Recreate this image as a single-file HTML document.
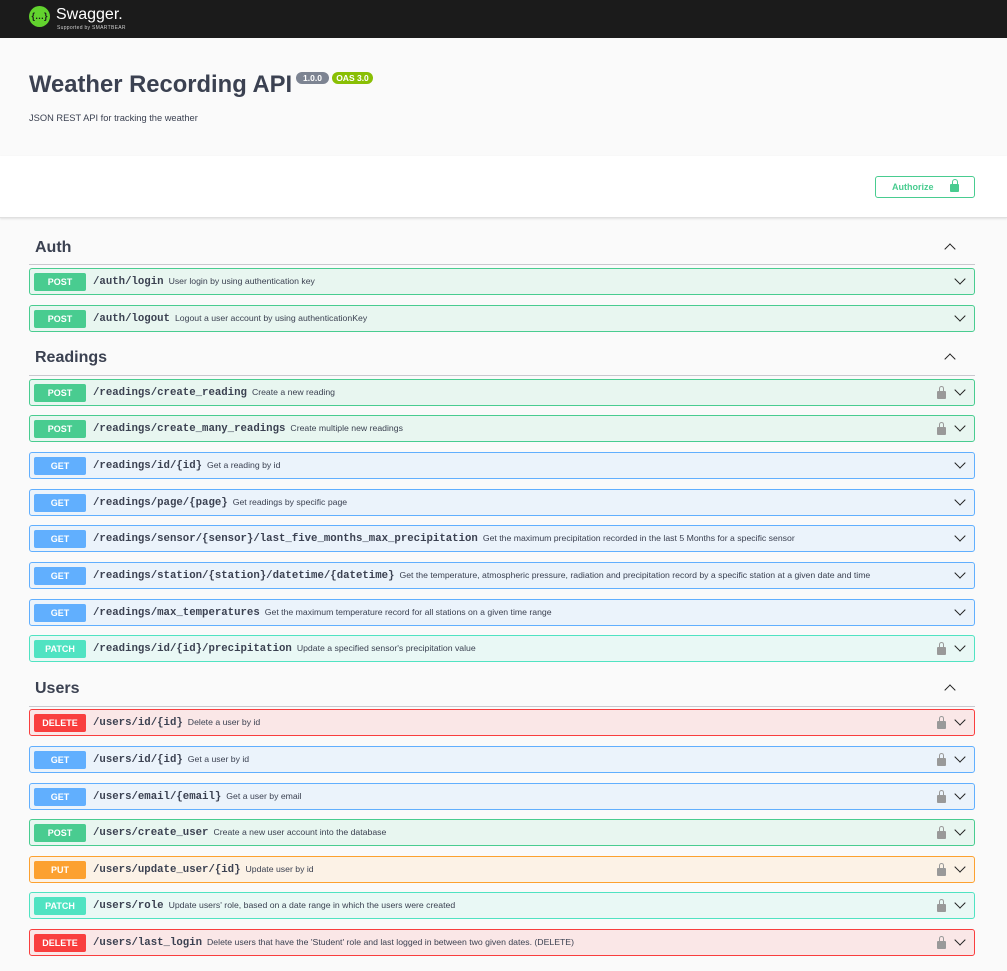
<!DOCTYPE html>
<html><head><meta charset="utf-8"><style>
*{margin:0;padding:0;box-sizing:border-box}
body{width:1007px;height:971px;background:#fafafa;font-family:"Liberation Sans",sans-serif;position:relative;overflow:hidden;color:#3b4151}
.top{position:absolute;left:0;top:0;width:1007px;height:38px;background:#1b1b1b}
.logo{position:absolute;left:29px;top:6px;width:21px;height:21px;border-radius:50%;background:#62d32e;color:#1b1b1b;font-size:9px;font-weight:bold;text-align:center;line-height:21px}
.brand{position:absolute;left:56px;top:6px;color:#fff;font-size:16px}
.sub{position:absolute;left:57px;top:25px;color:#ccc;font-size:5px;letter-spacing:.3px}
h1{position:absolute;left:29px;top:71px;font-size:23.8px;font-weight:bold;color:#3b4151}
.ver{position:absolute;top:72px;height:12px;border-radius:6px;color:#fff;font-size:8.5px;font-weight:bold;line-height:12px;text-align:center}
.desc{position:absolute;left:29px;top:113px;font-size:9.3px}
.white{position:absolute;left:0;top:156px;width:1007px;height:62px;background:#fff;border-bottom:1px solid #e0e0e0;box-shadow:0 1px 2px rgba(0,0,0,.1)}
.auth{position:absolute;left:875px;top:176px;width:100px;height:22px;border:1px solid #49cc90;border-radius:3px;color:#49cc90;font-size:9px;font-weight:bold;line-height:20px;padding-left:16px}
.auth i{position:absolute;right:15px;top:7px;width:9px;height:8px;background:#49cc90;border-radius:1px}
.auth i:before{content:"";position:absolute;left:1.5px;top:-5px;width:4px;height:5px;border:1.5px solid #49cc90;border-bottom:none;border-radius:3px 3px 0 0}
.tag{position:absolute;left:35px;font-size:16px;font-weight:bold}
.line{position:absolute;left:29px;width:946px;height:1px;background:#c8c8ce}
.up{position:absolute;left:946px;width:8px;height:8px;border-left:1.3px solid #222;border-top:1.3px solid #222;transform:rotate(45deg)}
.op{position:absolute;left:29px;width:946px;height:27px;border:1px solid;border-radius:3px}
.m{position:absolute;left:4px;top:4px;width:52px;height:18px;border-radius:2px;color:#fff;font-size:9px;font-weight:bold;text-align:center;line-height:18px}
.p{position:absolute;left:63px;top:7px;font-family:"Liberation Mono",monospace;font-weight:bold;font-size:10.7px;color:#3b4151;white-space:nowrap}
.p span{font-family:"Liberation Sans",sans-serif;font-weight:normal;font-size:8.7px;margin-left:5px}
.dn{position:absolute;right:10px;top:6px;width:8px;height:8px;border-right:1.3px solid #222;border-bottom:1.3px solid #222;transform:rotate(45deg)}
.lk{position:absolute;right:28px;top:11px;width:9px;height:8px;background:#999;border-radius:1px}
.lk:before{content:"";position:absolute;left:1.5px;top:-5px;width:3px;height:5px;border:1.5px solid #999;border-bottom:none;border-radius:3px 3px 0 0}
.post{background:#e8f6f0;border-color:#49cc90}.post .m{background:#49cc90}
.get{background:#ebf3fb;border-color:#61affe}.get .m{background:#61affe}
.patch{background:#e9f8f5;border-color:#50e3c2}.patch .m{background:#50e3c2}
.del{background:#fae7e7;border-color:#f93e3e}.del .m{background:#f93e3e}
.put{background:#fcf2e6;border-color:#fca130}.put .m{background:#fca130}
</style></head><body>
<div class="top"><div class="logo">{…}</div><div class="brand">Swagger.</div><div class="sub">Supported by SMARTBEAR</div></div>
<h1>Weather Recording API</h1>
<div class="ver" style="left:296px;width:33px;background:#7d8492">1.0.0</div>
<div class="ver" style="left:332px;width:41px;background:#89bf04">OAS 3.0</div>
<div class="desc">JSON REST API for tracking the weather</div>
<div class="white"></div>
<div class="auth">Authorize<i></i></div>

<div class="tag" style="top:239px">Auth</div><div class="up" style="top:245px"></div><div class="line" style="top:264px"></div>
<div class="op post" style="top:268px"><div class="m">POST</div><div class="p">/auth/login<span>User login by using authentication key</span></div><div class="dn"></div></div>
<div class="op post" style="top:305px"><div class="m">POST</div><div class="p">/auth/logout<span>Logout a user account by using authenticationKey</span></div><div class="dn"></div></div>

<div class="tag" style="top:349px">Readings</div><div class="up" style="top:355px"></div><div class="line" style="top:375px"></div>
<div class="op post" style="top:379px"><div class="m">POST</div><div class="p">/readings/create_reading<span>Create a new reading</span></div><div class="lk"></div><div class="dn"></div></div>
<div class="op post" style="top:415px"><div class="m">POST</div><div class="p">/readings/create_many_readings<span>Create multiple new readings</span></div><div class="lk"></div><div class="dn"></div></div>
<div class="op get" style="top:452px"><div class="m">GET</div><div class="p">/readings/id/{id}<span>Get a reading by id</span></div><div class="dn"></div></div>
<div class="op get" style="top:489px"><div class="m">GET</div><div class="p">/readings/page/{page}<span>Get readings by specific page</span></div><div class="dn"></div></div>
<div class="op get" style="top:525px"><div class="m">GET</div><div class="p">/readings/sensor/{sensor}/last_five_months_max_precipitation<span>Get the maximum precipitation recorded in the last 5 Months for a specific sensor</span></div><div class="dn"></div></div>
<div class="op get" style="top:562px"><div class="m">GET</div><div class="p">/readings/station/{station}/datetime/{datetime}<span>Get the temperature, atmospheric pressure, radiation and precipitation record by a specific station at a given date and time</span></div><div class="dn"></div></div>
<div class="op get" style="top:599px"><div class="m">GET</div><div class="p">/readings/max_temperatures<span>Get the maximum temperature record for all stations on a given time range</span></div><div class="dn"></div></div>
<div class="op patch" style="top:635px"><div class="m">PATCH</div><div class="p">/readings/id/{id}/precipitation<span>Update a specified sensor's precipitation value</span></div><div class="lk"></div><div class="dn"></div></div>

<div class="tag" style="top:680px">Users</div><div class="up" style="top:686px"></div><div class="line" style="top:706px"></div>
<div class="op del" style="top:709px"><div class="m">DELETE</div><div class="p">/users/id/{id}<span>Delete a user by id</span></div><div class="lk"></div><div class="dn"></div></div>
<div class="op get" style="top:746px"><div class="m">GET</div><div class="p">/users/id/{id}<span>Get a user by id</span></div><div class="lk"></div><div class="dn"></div></div>
<div class="op get" style="top:783px"><div class="m">GET</div><div class="p">/users/email/{email}<span>Get a user by email</span></div><div class="lk"></div><div class="dn"></div></div>
<div class="op post" style="top:819px"><div class="m">POST</div><div class="p">/users/create_user<span>Create a new user account into the database</span></div><div class="lk"></div><div class="dn"></div></div>
<div class="op put" style="top:856px"><div class="m">PUT</div><div class="p">/users/update_user/{id}<span>Update user by id</span></div><div class="lk"></div><div class="dn"></div></div>
<div class="op patch" style="top:892px"><div class="m">PATCH</div><div class="p">/users/role<span>Update users' role, based on a date range in which the users were created</span></div><div class="lk"></div><div class="dn"></div></div>
<div class="op del" style="top:929px"><div class="m">DELETE</div><div class="p">/users/last_login<span>Delete users that have the 'Student' role and last logged in between two given dates. (DELETE)</span></div><div class="lk"></div><div class="dn"></div></div>
</body></html>
